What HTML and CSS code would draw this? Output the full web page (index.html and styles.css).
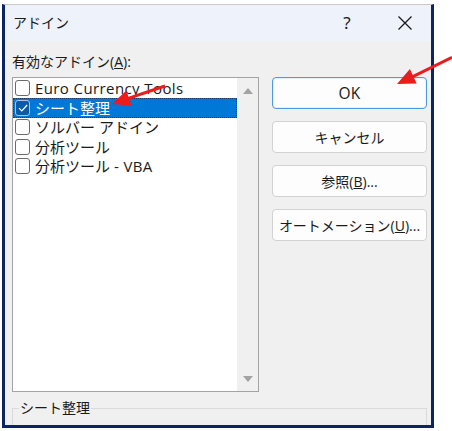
FILE: index.html
```html
<!DOCTYPE html>
<html lang="ja">
<head>
<meta charset="utf-8">
<link rel="stylesheet" href="styles.css">
</head>
<body>
<div class="dialog">
  <div class="titlebar">
    <span class="title">アドイン</span>
    <span class="help">?</span>
    <span class="close"><svg width="16" height="16" viewBox="0 0 16 16"><path d="M1.5 1.5 L14.5 14.5 M14.5 1.5 L1.5 14.5" stroke="#1a1a1a" stroke-width="1.3" fill="none"/></svg></span>
  </div>
  <div class="content">
    <div class="label">有効なアドイン(<u>A</u>):</div>
    <div class="list">
      <div class="items">
        <div class="item"><span class="cb"></span><span class="txt latin">Euro Currency Tools</span></div>
        <div class="item selected"><span class="cb checked"><svg width="12" height="12" viewBox="0 0 12 12"><path d="M2 6.2 L4.8 9 L10.2 3" stroke="#fff" stroke-width="1.2" fill="none"/></svg></span><span class="txt">シート整理</span></div>
        <div class="item"><span class="cb"></span><span class="txt">ソルバー アドイン</span></div>
        <div class="item"><span class="cb"></span><span class="txt">分析ツール</span></div>
        <div class="item"><span class="cb"></span><span class="txt">分析ツール <span class="latin">- VBA</span></span></div>
      </div>
      <div class="scrollbar">
        <span class="arrow up"></span>
        <span class="arrow down"></span>
      </div>
    </div>
    <div class="buttons">
      <button class="btn default"><span class="ok">OK</span></button>
      <button class="btn">キャンセル</button>
      <button class="btn">参照(<u>B</u>)...</button>
      <button class="btn">オートメーション(<u>U</u>)...</button>
    </div>
  </div>
  <fieldset class="desc"><legend>シート整理</legend></fieldset>
</div>
<svg class="annot" width="452" height="431" viewBox="0 0 452 431">
  <polygon fill="#ea1c1c" points="397,84 416.7,83.5 413.9,77.7 452.6,58.7 451.4,56.1 412.7,74.9 409.9,69.1"/>
  <polygon fill="#ea1c1c" points="112,104 131.6,105.8 129.5,99.6 165.5,87.4 164.5,84.6 128.5,96.8 126.4,90.6"/>
</svg>
</body>
</html>
```
FILE: styles.css
```css
html, body {
  margin: 0;
  padding: 0;
  background: #ffffff;
}
body {
  width: 452px;
  height: 431px;
  overflow: hidden;
  font-family: "Open Sans", "Noto Sans CJK JP", sans-serif;
  color: #1a1a1a;
}
.dialog {
  margin: 4px 0 0 2px;
  width: 432px;
  height: 424px;
  box-sizing: border-box;
  border: 3px solid #0b2466;
  border-top: 1px solid #c9c9c9;
  background: #f0f0f0;
  display: flex;
  flex-direction: column;
  overflow: hidden;
}
.titlebar {
  height: 36px;
  flex: none;
  background: #eef2fa;
  display: flex;
  align-items: center;
  font-size: 14px;
  line-height: 16px;
}
.title {
  margin-left: 8px;
  flex: 1;
}
.help {
  width: 16px;
  text-align: center;
  font-family: "Noto Sans", sans-serif;
  font-size: 17px;
  line-height: 18px;
  margin-right: 42px;
}
.close {
  width: 16px;
  height: 16px;
  margin-right: 18px;
  display: flex;
}
.content {
  display: grid;
  grid-template-columns: 247px 155px;
  grid-template-rows: 16px 315px;
  column-gap: 13px;
  row-gap: 7px;
  padding: 13px 0 0 7px;
}
.label {
  grid-column: 1 / 3;
  font-size: 14px;
  line-height: 16px;
  white-space: nowrap;
}
.list {
  grid-column: 1;
  grid-row: 2;
  background: #ffffff;
  border: 1px solid #a3a3a3;
  box-sizing: border-box;
  display: flex;
}
.items {
  flex: 1;
  padding-top: 0.5px;
}
.item {
  height: 19.5px;
  display: flex;
  align-items: center;
  box-sizing: border-box;
  font-size: 15px;
  white-space: nowrap;
}
.item.selected {
  background: #0078d7;
  color: #ffffff;
  outline: 1px dotted #1a3d6b;
  outline-offset: -1px;
}
.cb {
  width: 15px;
  height: 16px;
  box-sizing: border-box;
  border: 1px solid #6b6b6b;
  border-radius: 3px;
  background: #ffffff;
  margin-left: 2px;
  margin-right: 5px;
  display: flex;
  align-items: center;
  justify-content: center;
}
.cb.checked {
  background: #0a5aa8;
  border-color: #a9c8ea;
}
.txt {
  line-height: 18px;
}
.latin {
  letter-spacing: 0.4px;
}
.scrollbar {
  width: 21px;
  background: #f0f0f0;
  display: flex;
  flex-direction: column;
  justify-content: space-between;
  align-items: center;
  padding: 10px 0 9px;
}
.arrow {
  width: 0;
  height: 0;
  border-left: 5px solid transparent;
  border-right: 5px solid transparent;
}
.arrow.up {
  border-bottom: 6px solid #a3a3a3;
}
.arrow.down {
  border-top: 6px solid #a3a3a3;
}
.buttons {
  grid-column: 2;
  grid-row: 2;
  display: flex;
  flex-direction: column;
  gap: 12px;
}
.btn {
  height: 32px;
  box-sizing: border-box;
  border: 1px solid #d2d2d2;
  border-radius: 4px;
  background: #fdfdfd;
  font-family: "Open Sans", "Noto Sans CJK JP", sans-serif;
  font-size: 14px;
  color: #1a1a1a;
  padding: 0;
  white-space: nowrap;
}
.ok {
  font-size: 15.5px;
  letter-spacing: 0.3px;
}
.btn.default {
  border: 1px solid #4c9be0;
  box-shadow: inset 0 0 0 1px #e5f1fb;
}
.desc {
  margin: 8px 4px 0 7px;
  padding: 0;
  border: 1px solid #dadada;
  height: 40px;
  flex: none;
}
.desc legend {
  margin-left: 6px;
  padding: 0 1px;
  font-size: 14px;
  line-height: 16px;
}
.annot {
  position: absolute;
  left: 0;
  top: 0;
  pointer-events: none;
}
```
